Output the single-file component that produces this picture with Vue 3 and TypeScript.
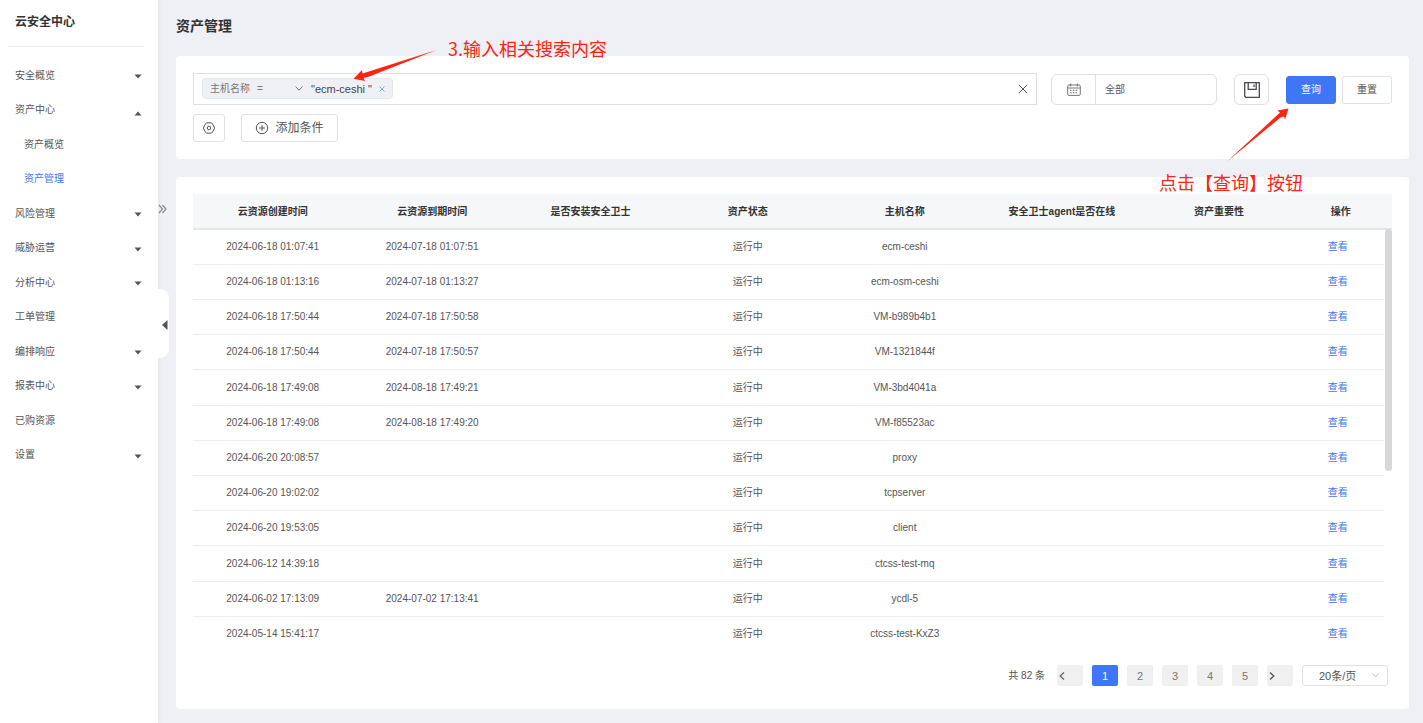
<script setup lang="ts">
import { ref } from 'vue'

interface MenuItem {
  label: string
  arrow?: 'up' | 'down'
  children?: { label: string; active?: boolean }[]
}

interface AssetRow {
  created: string
  expires: string
  host: string
}

const menu: MenuItem[] = [
  { label: '安全概览', arrow: 'down' },
  { label: '资产中心', arrow: 'up', children: [{ label: '资产概览' }, { label: '资产管理', active: true }] },
  { label: '风险管理', arrow: 'down' },
  { label: '威胁运营', arrow: 'down' },
  { label: '分析中心', arrow: 'down' },
  { label: '工单管理' },
  { label: '编排响应', arrow: 'down' },
  { label: '报表中心', arrow: 'down' },
  { label: '已购资源' },
  { label: '设置', arrow: 'down' },
]

const columns: string[] = [
  '云资源创建时间',
  '云资源到期时间',
  '是否安装安全卫士',
  '资产状态',
  '主机名称',
  '安全卫士agent是否在线',
  '资产重要性',
  '操作',
]

const rows: AssetRow[] = [
  { created: '2024-06-18 01:07:41', expires: '2024-07-18 01:07:51', host: 'ecm-ceshi' },
  { created: '2024-06-18 01:13:16', expires: '2024-07-18 01:13:27', host: 'ecm-osm-ceshi' },
  { created: '2024-06-18 17:50:44', expires: '2024-07-18 17:50:58', host: 'VM-b989b4b1' },
  { created: '2024-06-18 17:50:44', expires: '2024-07-18 17:50:57', host: 'VM-1321844f' },
  { created: '2024-06-18 17:49:08', expires: '2024-08-18 17:49:21', host: 'VM-3bd4041a' },
  { created: '2024-06-18 17:49:08', expires: '2024-08-18 17:49:20', host: 'VM-f85523ac' },
  { created: '2024-06-20 20:08:57', expires: '', host: 'proxy' },
  { created: '2024-06-20 19:02:02', expires: '', host: 'tcpserver' },
  { created: '2024-06-20 19:53:05', expires: '', host: 'client' },
  { created: '2024-06-12 14:39:18', expires: '', host: 'ctcss-test-mq' },
  { created: '2024-06-02 17:13:09', expires: '2024-07-02 17:13:41', host: 'ycdl-5' },
  { created: '2024-05-14 15:41:17', expires: '', host: 'ctcss-test-KxZ3' },
]

const pages: number[] = [1, 2, 3, 4, 5]
const current = ref(1)
const keyword = ref('')
const range = ref('全部')
</script>

<template>
  <div class="app">
    <aside class="sidebar">
      <h1 class="brand">云安全中心</h1>
      <nav aria-label="主菜单">
        <ul class="menu">
          <li v-for="item in menu" :key="item.label">
            <a href="#" class="item">
              <span>{{ item.label }}</span>
              <svg v-if="item.arrow" class="caret" :class="item.arrow" viewBox="0 0 8 5" width="8" height="5" aria-hidden="true">
                <path :d="item.arrow === 'down' ? 'M0.5 0.5h7L4 4.5z' : 'M0.5 4.5h7L4 0.5z'" fill="#555" />
              </svg>
            </a>
            <ul v-if="item.children" class="submenu">
              <li v-for="child in item.children" :key="child.label">
                <a href="#" class="item sub" :class="{ active: child.active }">{{ child.label }}</a>
              </li>
            </ul>
          </li>
        </ul>
      </nav>
      <svg class="expand" viewBox="0 0 9 10" width="9" height="10" aria-hidden="true">
        <path d="M1 1l3.5 4L1 9M4.5 1L8 5 4.5 9" fill="none" stroke="#8c8c90" stroke-width="1.2" />
      </svg>
      <button class="handle" type="button" aria-label="收起菜单">
        <svg viewBox="0 0 6 10" width="6" height="10" aria-hidden="true"><path d="M5.5 0v10L0 5z" fill="#555" /></svg>
      </button>
    </aside>

    <main class="main">
      <h2 class="title">资产管理</h2>

      <section class="card filters">
        <div class="row">
          <div class="search">
            <div class="tag">
              <span class="field">主机名称</span>
              <span class="operator">
                <select aria-label="运算符"><option>=</option></select>
                <svg viewBox="0 0 8 5" width="8" height="5" aria-hidden="true"><path d="M0.5 0.5L4 4.2 7.5 0.5" fill="none" stroke="#777" /></svg>
              </span>
              <span class="value">"ecm-ceshi "</span>
              <button type="button" class="remove" aria-label="移除条件">
                <svg viewBox="0 0 6 6" width="6" height="6"><path d="M0.5 0.5l5 5M5.5 0.5l-5 5" stroke="#8f9cf2" /></svg>
              </button>
            </div>
            <input v-model="keyword" type="text" aria-label="搜索" />
            <button type="button" class="clear" aria-label="清空">
              <svg viewBox="0 0 10 10" width="10" height="10"><path d="M0.8 0.8l8.4 8.4M9.2 0.8L0.8 9.2" stroke="#555" /></svg>
            </button>
          </div>

          <div class="date">
            <label for="range" aria-label="时间范围">
              <svg viewBox="0 0 14 13" width="14" height="13" fill="none" stroke="#666" stroke-width="0.9">
                <rect x="0.7" y="2" width="12.6" height="10.4" rx="1.2" />
                <path d="M0.7 5h12.6M3.7 0.5v3M10.3 0.5v3" />
                <path d="M3 7.3h8M3 9.7h8" stroke-dasharray="1.6 1.2" stroke-width="1.1" />
              </svg>
            </label>
            <input id="range" v-model="range" type="text" readonly />
          </div>

          <button type="button" class="save" aria-label="保存">
            <svg viewBox="0 0 16 16" width="16" height="16" fill="none" stroke="#4a4550" stroke-width="1.3">
              <path d="M0.7 0.7h14.6v14.6H1.8L0.7 14.2z" />
              <path d="M4.2 0.7v6.6h8V0.7M10 2.4v2.6" />
            </svg>
          </button>

          <div class="actions">
            <button type="button" class="btn primary">查询</button>
            <button type="button" class="btn">重置</button>
          </div>
        </div>

        <div class="row tools">
          <button type="button" class="tool" aria-label="设置">
            <svg viewBox="0 0 14 12" width="14" height="12" fill="none" stroke="#555">
              <path d="M5 0.8h4q.8 0 1.2.7l2 3.5q.5 1 0 2l-2 3.5q-.4.7-1.2.7H5q-.8 0-1.2-.7L1.800 7q-.5-1 0-2l2-3.5Q4.2.8 5 .8z" />
              <circle cx="7" cy="6" r="1.8" />
            </svg>
          </button>
          <button type="button" class="tool add">
            <svg viewBox="0 0 14 14" width="14" height="14" fill="none" stroke="#555">
              <circle cx="7" cy="7" r="5.7" />
              <path d="M7 4v6M4 7h6" />
            </svg>
            <span>添加条件</span>
          </button>
        </div>
      </section>

      <section class="card list">
        <div class="table-wrap">
          <table>
            <colgroup>
              <col class="c-time" /><col class="c-time" />
              <col /><col /><col /><col /><col />
              <col class="c-action" /><col class="c-gutter" />
            </colgroup>
            <thead>
              <tr>
                <th v-for="name in columns" :key="name" scope="col">{{ name }}</th>
                <td></td>
              </tr>
            </thead>
            <tbody>
              <tr v-for="(row, i) in rows" :key="i">
                <td>{{ row.created }}</td>
                <td>{{ row.expires }}</td>
                <td></td>
                <td>运行中</td>
                <td>{{ row.host }}</td>
                <td></td>
                <td></td>
                <td class="view"><a href="#">查看</a></td>
              </tr>
            </tbody>
          </table>
          <div class="scrollbar"></div>
        </div>

        <div class="pager">
          <span class="total">共 82 条</span>
          <button type="button" class="page step" aria-label="上一页">
            <svg viewBox="0 0 6 8" width="6" height="8"><path d="M5 0.5L1.2 4 5 7.5" fill="none" stroke="#666" stroke-width="1.3" /></svg>
          </button>
          <button
            v-for="p in pages"
            :key="p"
            type="button"
            class="page"
            :class="{ current: p === current }"
            @click="current = p"
          >{{ p }}</button>
          <button type="button" class="page step" aria-label="下一页">
            <svg viewBox="0 0 6 8" width="6" height="8"><path d="M1 0.5L4.8 4 1 7.5" fill="none" stroke="#555" stroke-width="1.3" /></svg>
          </button>
          <div class="size">
            <select aria-label="每页条数"><option>20条/页</option></select>
            <svg viewBox="0 0 7 5" width="7" height="5" aria-hidden="true"><path d="M0.5 0.5l3 3.5 3-3.5" fill="none" stroke="#bbb" /></svg>
          </div>
        </div>
      </section>

      <div class="note note-input">
        <span>3.输入相关搜索内容</span>
        <svg viewBox="0 0 84 32" width="84" height="32" aria-hidden="true">
          <path d="M83.5 0L9.5 23.5 9 20 0.5 28.800 12 31 10.5 28 15 27z" fill="#ff2312" />
        </svg>
      </div>
      <div class="note note-query">
        <svg viewBox="0 0 62 54" width="62" height="54" aria-hidden="true">
          <path d="M0 53.5L53 4.500 50.300 2.500 61.500 0.500 58 11.500 57 8.500 53.500 9.500z" fill="#ff2312" />
        </svg>
        <span>点击【查询】按钮</span>
      </div>
    </main>
  </div>
</template>

<style>
body {
  background: #eff0f5;
}
</style>

<style scoped>
.app {
  display: flex;
  min-height: 100vh;
  background: #eff0f5;
  color: #555;
  font-family: "Liberation Sans", "Noto Sans CJK SC", sans-serif;
  font-size: 10px;
  line-height: 16px;
}
.app *,
.app *::before {
  box-sizing: border-box;
}
button,
input,
select {
  margin: 0;
  padding: 0;
  border: 0;
  background: none;
  color: inherit;
  font: inherit;
  outline: none;
}
select {
  appearance: none;
}
svg {
  display: block;
  flex: none;
}
a {
  color: inherit;
  text-decoration: none;
}
ul {
  margin: 0;
  padding: 0;
  list-style: none;
}

.sidebar {
  position: relative;
  z-index: 1;
  flex: none;
  width: 158px;
  background: #fff;
  box-shadow: 1px 0 4px rgba(60, 70, 110, 0.08);
}
.brand {
  margin: 0 14px 11px 8px;
  padding: 14px 7px 16px;
  border-bottom: 1px solid #eeeff6;
  color: #333;
  font-size: 12px;
  line-height: 16px;
  font-weight: 700;
}
.item {
  display: flex;
  align-items: center;
  justify-content: space-between;
  height: 35px;
  padding: 0 16px 0 15px;
}
.menu > li:nth-child(even) > .item,
.submenu > li:nth-child(even) > .item {
  height: 34px;
}
.item.sub {
  padding-left: 24px;
}
.item.active {
  color: #3e76f6;
}
.caret {
  margin-top: 2px;
}
.caret.up {
  margin-top: 6px;
}
.expand {
  position: absolute;
  top: 204px;
  right: -9px;
}
.handle {
  position: absolute;
  top: 289px;
  right: -11px;
  display: flex;
  align-items: center;
  justify-content: flex-end;
  width: 12px;
  height: 69px;
  padding: 3px 1px 0 0;
  border-radius: 0 9px 9px 0;
  background: #fff;
}

.main {
  position: relative;
  flex: 1;
  min-width: 0;
  padding: 16px 14px 14px 18px;
}
.title {
  margin: 0 0 20px;
  color: #333;
  font-size: 14px;
  line-height: 20px;
  font-weight: 700;
}
.card {
  border-radius: 4px;
  background: #fff;
}
.filters {
  margin-bottom: 18px;
  padding: 17px;
}
.row {
  display: flex;
  align-items: center;
}
.search {
  display: flex;
  flex: 1;
  align-items: center;
  min-width: 0;
  height: 32px;
  padding: 0 8px;
  border: 1px solid #dcdfe6;
}
.search input {
  flex: 1;
  min-width: 0;
}
.tag {
  display: flex;
  align-items: center;
  height: 21px;
  margin-bottom: 1px;
  padding: 0 7px;
  border: 1px solid #e4e8f4;
  border-radius: 4px;
  background: #eff0f4;
  color: #777;
}
.operator {
  display: flex;
  align-items: center;
  width: 46px;
  margin: 0 8px 0 7px;
}
.operator select {
  flex: 1;
  min-width: 0;
}
.value {
  color: #444;
  font-size: 11px;
  white-space: pre;
}
.remove {
  margin-left: 7px;
}
.date {
  display: flex;
  width: 166px;
  height: 31px;
  margin: 1px 17px 0 14px;
  border: 1px solid #dcdfe6;
  border-radius: 6px;
}
.date label {
  display: flex;
  align-items: center;
  justify-content: center;
  width: 44px;
  border-right: 1px solid #dcdfe6;
}
.date input {
  flex: 1;
  min-width: 0;
  padding: 0 9px;
}
.save {
  display: flex;
  align-items: center;
  justify-content: center;
  width: 35px;
  height: 31px;
  margin-top: 1px;
  border: 1px solid #dcdfe6;
  border-radius: 6px;
}
.actions {
  display: flex;
  gap: 6px;
  margin: 2px 0 0 17px;
}
.btn {
  width: 50px;
  height: 28px;
  border: 1px solid #dfe1e6;
  border-radius: 3px;
  background: #fff;
}
.btn.primary {
  border-color: #3e76f6;
  background: #3e76f6;
  color: #fff;
}
.tools {
  gap: 16px;
  margin-top: 9px;
}
.tool {
  display: flex;
  align-items: center;
  justify-content: center;
  width: 32px;
  height: 28px;
  border: 1px solid #dfe1e6;
  border-radius: 3px;
}
.tool.add {
  gap: 6px;
  width: 97px;
  font-size: 12px;
}

.list {
  padding: 17px 17px 23px;
}
.table-wrap {
  position: relative;
}
table {
  width: 100%;
  table-layout: fixed;
  border-collapse: separate;
  border-spacing: 0;
}
.c-time {
  width: 13.3%;
}
.c-action {
  width: 7.2%;
}
.c-gutter {
  width: 8px;
}
th,
td {
  height: 35px;
  padding: 0;
  border-bottom: 1px solid #eceef3;
  text-align: center;
  white-space: nowrap;
}
tbody tr:nth-child(5n) td {
  height: 36px;
}
thead th,
thead td {
  height: 36px;
  padding-top: 2px;
  border-bottom: 2px solid #e4e6eb;
  background: #f6f7f9;
  color: #333;
  font-weight: 700;
}
tbody tr:last-child td {
  border-bottom-color: transparent;
}
td.view {
  padding-right: 6px;
  color: #3e76f6;
}
.scrollbar {
  position: absolute;
  top: 35px;
  right: 0;
  width: 7px;
  height: 242px;
  border-radius: 4px;
  background: #d8d8d8;
}

.pager {
  display: flex;
  align-items: center;
  justify-content: flex-end;
  gap: 9px;
  margin: 13px 4px 0 0;
}
.total {
  margin-right: 3px;
}
.page {
  display: flex;
  align-items: center;
  justify-content: center;
  width: 26px;
  height: 21px;
  border-radius: 2px;
  background: #f0f0f0;
  color: #777;
  font-size: 11px;
}
.page.step {
  justify-content: flex-start;
  padding-left: 2px;
}
.page.current {
  background: #3e76f6;
  color: #fff;
}
.size {
  display: flex;
  align-items: center;
  width: 86px;
  height: 21px;
  padding-right: 8px;
  border: 1px solid #dfe1e6;
  border-radius: 3px;
}
.size select {
  flex: 1;
  min-width: 0;
  padding-left: 16px;
  font-size: 11px;
}

.note {
  position: absolute;
  color: #ff2312;
  font-family: "Noto Sans CJK SC", sans-serif;
  font-size: 18px;
  line-height: 24px;
  white-space: nowrap;
  pointer-events: none;
}
.note-input {
  top: 36px;
  left: 195px;
  display: flex;
  flex-direction: row-reverse;
  gap: 11px;
}
.note-input svg {
  margin-top: 14px;
}
.note-query {
  top: 108px;
  right: 120px;
}
.note-query svg {
  margin: 0 0 8px 68px;
}
.note-query span {
  display: block;
}
</style>
